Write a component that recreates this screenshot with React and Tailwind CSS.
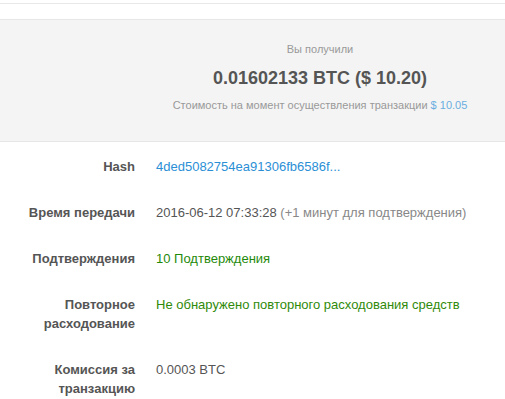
export default function App() {
  const rows = [
    {
      label: 'Hash',
      value: <span className="text-[#2b8fd6]">4ded5082754ea91306fb6586f...</span>,
    },
    {
      label: 'Время передачи',
      value: (
        <span className="text-[#555]">
          2016-06-12 07:33:28 <span className="text-[#888]">(+1 минут для подтверждения)</span>
        </span>
      ),
    },
    {
      label: 'Подтверждения',
      value: <span className="text-[#1f8a0a]">10 Подтверждения</span>,
    },
    {
      label: 'Повторное расходование',
      value: <span className="text-[#2f8a0a]">Не обнаружено повторного расходования средств</span>,
    },
    {
      label: 'Комиссия за транзакцию',
      value: <span className="text-[#555]">0.0003 BTC</span>,
    },
  ]

  return (
    <div className="w-[505px] h-[399px] overflow-hidden bg-white font-['Liberation_Sans',Arial,sans-serif]">
      <div className="h-[3px]" />
      <div className="h-px bg-[#e8e8e8]" />
      <div className="h-[15px]" />

      {/* received summary */}
      <div className="flex h-[123px] border-y border-[#e6e6e6] bg-[#f4f4f4]">
        <div className="w-[135px] shrink-0" />
        <div className="flex flex-1 flex-col items-center pt-[22px]">
          <div className="text-[11px] leading-[14px] text-[#999]">Вы получили</div>
          <div className="mt-[11px] text-[18px] font-bold leading-[22px] text-[#555]">
            0.01602133 BTC ($ 10.20)
          </div>
          <div className="mt-[9px] text-[11px] leading-[14px] text-[#999]">
            Стоимость на момент осуществления транзакции <span className="text-[#6aaee0]">$ 10.05</span>
          </div>
        </div>
      </div>

      {/* details */}
      <div className="flex flex-col gap-[27px] pt-[15px] text-[13px] leading-[19px]">
        {rows.map((r) => (
          <div key={r.label} className="flex">
            <div className="w-[135px] shrink-0 text-right font-bold text-[#555]">{r.label}</div>
            <div className="pl-[21px]">{r.value}</div>
          </div>
        ))}
      </div>
    </div>
  )
}
